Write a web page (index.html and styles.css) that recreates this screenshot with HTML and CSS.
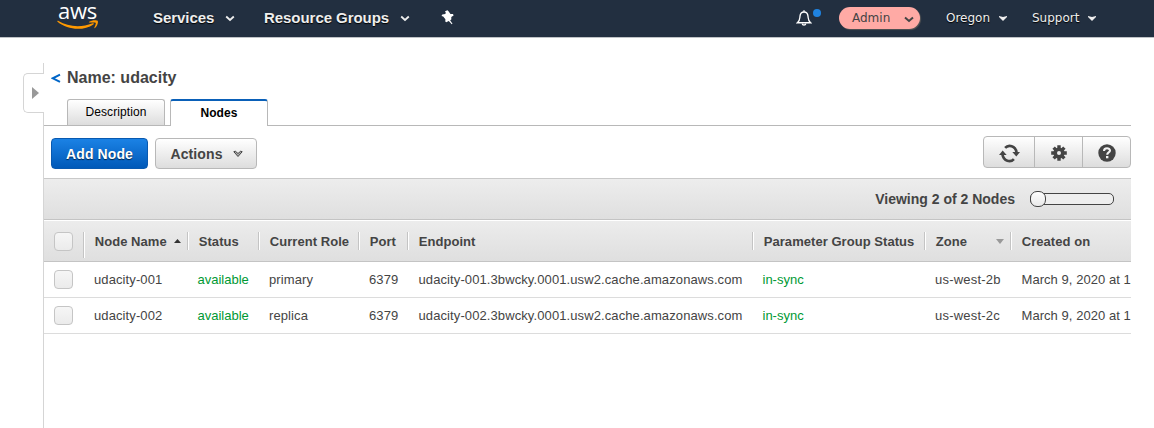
FILE: index.html
```html
<!DOCTYPE html>
<html lang="en">
<head>
<meta charset="utf-8">
<title>ElastiCache Nodes</title>
<link rel="stylesheet" href="styles.css">
</head>
<body>
<header class="topbar">
  <div class="logo">
    <span class="logo-text">aws</span>
    <svg class="smile" width="42" height="11" viewBox="0 0 42 11" fill="#f90"><path d="M.3 1.200C.6.7 1 .8 1.500 1.100C11 6.800 24 8 35.500 3.300C36.700 2.800 37.300 3.700 36.400 4.400C27 10.800 11 10.500.5 1.800Z"/><path d="M31.800 2C34.500 0 39.500-.2 40.600.7C41.700 2 40.200 6.300 38 8C37.500 8.400 37.100 8.100 37.400 7.500C38.200 5.800 39.200 3.500 38.700 2.800C38.100 2.100 34.700 2.500 32.200 2.600Z"/></svg>
  </div>
  <nav class="nav-main">
    <a class="nav-item services">Services<svg class="chev" width="10" height="7" viewBox="0 0 10 7"><path d="M1.200 1.500L5 5L8.800 1.500" /></svg></a>
    <a class="nav-item groups">Resource Groups<svg class="chev" width="10" height="7" viewBox="0 0 10 7"><path d="M1.200 1.500L5 5L8.800 1.500" /></svg></a>
    <svg class="pin" width="13" height="15" viewBox="0 0 13 15"><path fill="#fff" d="M4 1.200L6.500.2L7.500 1.200L9.500 4L12 4L12.600 5.500L10.300 7L10.300 9.500L9.100 10.200L11.500 13.800L10.700 14.300L7.800 10.900L5.200 12.300L4.300 11.500L4.400 9.200L2.200 6.600L.5 5.900L1.300 4.400L4.300 4.100L4.800 2.800Z"/></svg>
  </nav>
  <nav class="nav-user">
    <div class="alerts">
      <svg width="16" height="18" viewBox="0 0 18 19" preserveAspectRatio="none" fill="none" stroke="#fff" stroke-width="1.500"><path d="M1.600 14.500C4.500 12.300 4.200 10.500 4.500 7.500C4.800 4.700 6.500 3.200 9 3.200S13.200 4.700 13.500 7.500C13.800 10.500 13.500 12.300 16.400 14.500Z"/><path d="M9 3V1.200M7 15.500C7.300 17.500 10.700 17.500 11 15.500"/></svg>
      <i class="dot"></i>
    </div>
    <a class="account">Admin<svg width="10" height="7" viewBox="0 0 10 7"><path d="M1 1.500L5 5L9 1.500" fill="none" stroke="#444" stroke-width="2"/></svg></a>
    <a class="user-item region">Oregon<svg width="8" height="5" viewBox="0 0 8 5"><path fill="#eee" d="M0 0L4 1L8 0V1L4 5L0 1Z"/></svg></a>
    <a class="user-item">Support<svg width="8" height="5" viewBox="0 0 8 5"><path fill="#eee" d="M0 0L4 1L8 0V1L4 5L0 1Z"/></svg></a>
  </nav>
</header>
<div class="page">
  <aside class="rail">
    <div class="rail-top"></div>
    <button class="toggle"><svg width="7" height="12" viewBox="0 0 7 12"><path fill="#999" d="M0 0L7 6L0 12Z"/></svg></button>
    <div class="rail-rest"></div>
  </aside>
  <main class="content">
    <h1 class="title"><svg class="back" width="10" height="10" viewBox="0 0 10 10"><path d="M9 1.700L1.800 5.300L9 8.900" fill="none" stroke="#0066c8" stroke-width="2"/></svg>Name: udacity</h1>
    <div class="tabs"><a class="tab">Description</a><a class="tab active">Nodes</a></div>
    <div class="toolbar">
      <button class="btn primary">Add Node</button>
      <button class="btn actions">Actions<svg width="10" height="8" viewBox="0 0 10 8"><path fill="#aaa" stroke="#444" d="M.8 1.700L2.300 1.200L5 3.500L7.700 1.200L9.200 1.700L5 6.500Z"/></svg></button>
      <div class="icon-group">
        <button class="icon-btn refresh"><svg width="21" height="19" viewBox="0 0 20 18" preserveAspectRatio="none"><g fill="none" stroke="#444" stroke-width="2.500"><path d="M5.800 3.700C9 .2 15.700 1.500 16.700 8"/><path d="M14.200 14.300C11 17.800 4.300 16.500 3.300 10"/></g><path fill="#444" d="M12.700 7.500H20L16.500 11.800ZM0 10.500H7.300L3.500 6.200Z"/></svg></button>
        <button class="icon-btn gear"><svg width="16" height="16" viewBox="-8 -8 16 16"><g fill="#444"><path d="M-1.700-7.800H1.700V7.800H-1.700ZM-7.800-1.700V1.700H7.800V-1.700Z"/><path transform="rotate(45)" d="M-1.700-7.600H1.700V7.600H-1.700ZM-7.600-1.700V1.700H7.600V-1.700Z"/><circle r="5.600"/></g><circle r="2" fill="#eee"/></svg></button>
        <button class="icon-btn help"><svg width="18" height="18" viewBox="0 0 18 18"><circle cx="9" cy="9" r="8.700" fill="#444"/><path d="M6 7C6 3.300 12 3.500 12 6.600C12 8.600 9.200 8.400 9.200 10.700" fill="none" stroke="#f2f2f2" stroke-width="2.100"/><rect x="8" y="12" width="2.400" height="2.300" fill="#f2f2f2"/></svg></button>
      </div>
    </div>
    <div class="status-bar"><span>Viewing 2 of 2 Nodes</span><div class="slider"><i class="knob"></i></div></div>
    <div class="grid-row head">
      <div class="pick"><i class="check"></i></div>
      <div class="cell first">Node Name<svg class="sort-up" width="7" height="4" viewBox="0 0 7 4"><path fill="#333" d="M0 4L3.500 0L7 4Z"/></svg></div>
      <div class="cell">Status</div><div class="cell">Current Role</div><div class="cell">Port</div><div class="cell">Endpoint</div><div class="cell">Parameter Group Status</div>
      <div class="cell zone">Zone<svg width="8" height="5" viewBox="0 0 8 5"><path fill="#999" d="M0 0H8L4 5Z"/></svg></div><div class="cell">Created on</div>
    </div>
    <div class="grid-row">
      <div class="pick"><i class="check"></i></div><div class="cell">udacity-001</div><div class="cell ok">available</div><div class="cell">primary</div><div class="cell">6379</div><div class="cell endpoint">udacity-001.3bwcky.0001.usw2.cache.amazonaws.com</div><div class="cell ok">in-sync</div><div class="cell az">us-west-2b</div><div class="cell date">March 9, 2020 at 12</div>
    </div>
    <div class="grid-row">
      <div class="pick"><i class="check"></i></div><div class="cell">udacity-002</div><div class="cell ok">available</div><div class="cell">replica</div><div class="cell">6379</div><div class="cell endpoint">udacity-002.3bwcky.0001.usw2.cache.amazonaws.com</div><div class="cell ok">in-sync</div><div class="cell az">us-west-2c</div><div class="cell date">March 9, 2020 at 12</div>
    </div>
  </main>
</div>
</body>
</html>
```

FILE: styles.css
```css
* { box-sizing: border-box; }
body { margin: 0; height: 428px; overflow: hidden; background: #fff; color: #444; font-family: "Liberation Sans", Arial, sans-serif; }
button { margin: 0; padding: 0; font-family: inherit; color: inherit; }
svg { display: block; flex: none; }

.topbar { height: 38px; background: #222f40; border-bottom: 1px solid #bfc2c6; display: flex; color: #eee; }
.logo { width: 153px; padding: 0 0 0 57px; }
.logo-text { display: block; height: 20px; padding-left: 1px; font: 500 22px/20px "Open Sans", sans-serif; letter-spacing: -.3px; color: #fff; }
.nav-main { display: flex; align-items: center; height: 36px; width: 643px; }
.nav-item { display: flex; align-items: center; padding-bottom: 1px; font-size: 15px; font-weight: bold; letter-spacing: -.05px; text-shadow: 0 1px 1px #000; }
.services { width: 111px; }
.groups { width: 177px; }
.pin { margin-bottom: 2px; }
.chev { margin: 2px 0 0 11px; fill: none; stroke: #eee; stroke-width: 1.8; }
.nav-user { display: flex; align-items: center; height: 36px; font: 12px "DejaVu Sans", sans-serif; }
.alerts { position: relative; width: 43px; padding-bottom: 1px; }
.dot { position: absolute; left: 17px; top: 0; width: 8px; height: 8px; border-radius: 50%; background: #1f83e0; }
.account { display: flex; align-items: center; gap: 14px; width: 81px; height: 22px; padding-left: 13px; border-radius: 11px; background: #ffaaa5; color: #444; box-shadow: 1px 1px 1px #555; margin-right: 26px; }
.user-item { display: flex; align-items: center; gap: 9px; text-shadow: 0 1px 1px #000; }
.region { width: 86px; }
.account svg { margin-top: 2px; }

.page { display: flex; height: 390px; padding-top: 25px; }
.rail { width: 44px; padding-left: 23px; display: flex; flex-direction: column; }
.rail-top { height: 10px; border-right: 1px solid #d5d5d5; }
.toggle { width: 21px; height: 40px; padding-left: 8px; border: 1px solid #d5d5d5; border-right: 0; border-radius: 5px 0 0 5px; background: #fff; }
.rail-rest { flex: 1; border-right: 1px solid #d5d5d5; }
.content { width: 1087px; overflow: hidden; }
.title { display: flex; align-items: center; height: 29px; margin: 0; padding-left: 7px; font-size: 16px; line-height: 29px; }
.back { margin-right: 6px; }
.tabs { display: flex; align-items: flex-end; gap: 5px; height: 34px; padding-left: 23px; border-bottom: 1px solid #b8b8b8; color: #000; font-size: 12px; }
.tab { width: 98px; height: 26px; border: 1px solid #b8b8b8; border-bottom: 0; border-radius: 3px 3px 0 0; background: linear-gradient(#fff, #ddd); text-align: center; line-height: 24px; letter-spacing: .1px; }
.tab.active { height: 27px; margin-bottom: -1px; border-top: 2px solid #0a60b8; background: #fff; font-weight: bold; line-height: 25px; }
.toolbar { display: flex; height: 52px; padding: 10px 0 0 7px; }
.btn { display: flex; align-items: center; height: 31px; margin-top: 2px; border-radius: 4px; font-size: 14px; font-weight: bold; letter-spacing: .1px; }
.primary { width: 97px; justify-content: center; border: 1px solid #0959b0; background: linear-gradient(#1b82e5, #0059b8); color: #fff; text-shadow: 0 1px 1px #024; }
.actions { width: 102px; margin-left: 7px; padding-left: 14.5px; gap: 10px; border: 1px solid #b8b8b8; background: linear-gradient(#fff, #ddd); }
.icon-group { display: flex; width: 148px; height: 32px; margin-left: auto; border: 1px solid #b8b8b8; border-radius: 4px; background: linear-gradient(#fff, #ddd); }
.icon-btn { display: flex; align-items: center; justify-content: center; padding-top: 2px; border: 0; background: none; }
.refresh { width: 50px; }
.gear { width: 48px; border-left: 1px solid #b8b8b8; }
.help { width: 48px; border-left: 1px solid #b8b8b8; }
.status-bar { display: flex; justify-content: flex-end; align-items: center; height: 42px; padding-right: 17px; border-top: 1px solid #c9c9c9; border-bottom: 1px solid #c4c4c4; background: linear-gradient(#ededed, #dfdfdf); font-size: 14px; font-weight: bold; }
.slider { position: relative; width: 84px; height: 12px; margin-left: 15px; border: 1px solid #444; border-radius: 5px; background: #eee; }
.knob { position: absolute; left: -1px; top: -3px; width: 16px; height: 16px; border: 1px solid #444; border-radius: 7px; background: linear-gradient(#fff, #e8e8e8); }
.grid-row { display: grid; grid-template-columns: 39px 104px 71px 100px 49px 345px 172px 86px 121px; height: 36px; border-bottom: 1px solid #dcdcdc; font-size: 13px; letter-spacing: .1px; }
.pick { padding: 8px 0 0 10px; }
.check { display: block; width: 19px; height: 19px; border: 1px solid #c5c5c5; border-radius: 4px; background: linear-gradient(#f6f6f6, #ebebeb); }
.cell { padding-left: 11px; line-height: 35px; white-space: nowrap; overflow: hidden; }
.ok { padding-left: 10.5px; color: #093; letter-spacing: 0; }
.endpoint { padding-left: 11.5px; }
.az { letter-spacing: .2px; }
.date { padding-left: 11.5px; letter-spacing: .05px; }
.head { height: 42px; border-top: 1px solid #fff; border-bottom-color: #c4c4c4; background: linear-gradient(#ececec, #dfdfdf); font-weight: bold; letter-spacing: .05px; }
.head .pick { padding-top: 11px; }
.head .cell { display: flex; align-items: center; height: 18px; margin-top: 11px; padding: 2px 0 0 10.75px; border-left: 1px solid #c4c4c4; box-shadow: inset 1px 0 #fff; line-height: 18px; }
.head .first { height: 26px; padding-bottom: 8px; }
.head .sort-up { margin: 0 0 2px 7px; }
.head .zone { justify-content: space-between; padding-right: 6px; }
.head .zone svg { margin-bottom: 2px; }
```
